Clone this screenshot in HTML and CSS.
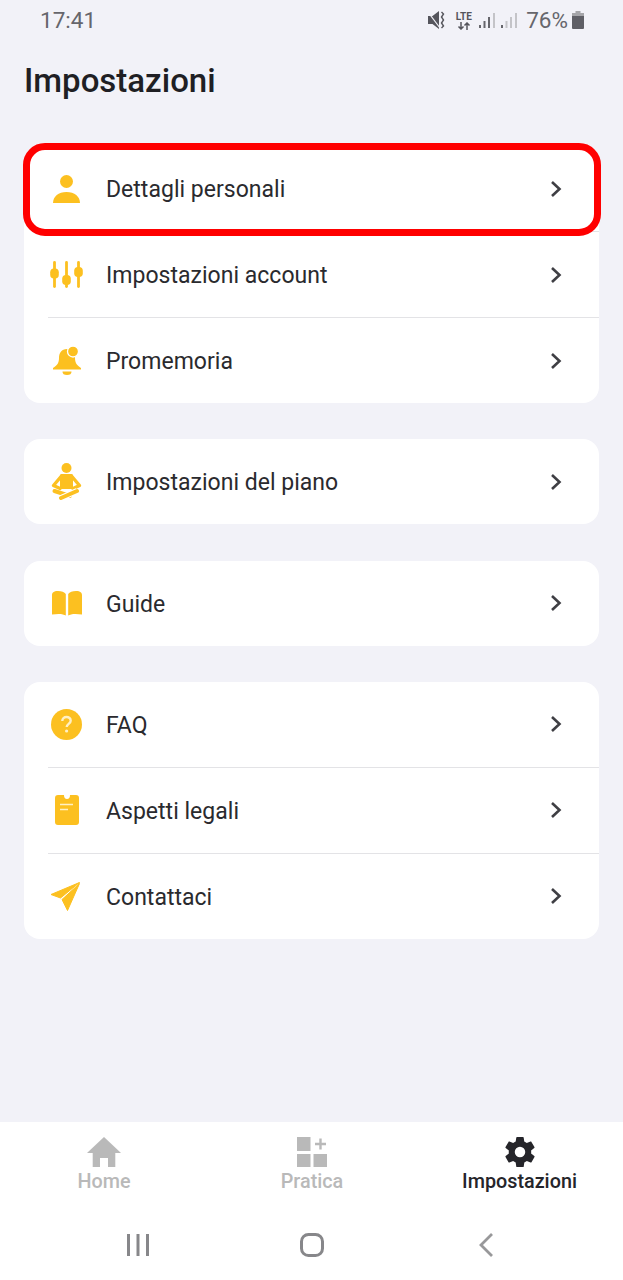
FILE: index.html
```html
<!DOCTYPE html>
<html lang="it">
<head>
<meta charset="utf-8">
<title>Impostazioni</title>
<link rel="stylesheet" href="styles.css">
</head>
<body>
<div class="screen">
  <div class="status">
    <span class="time">17:41</span>
    <div class="status-right">
      <svg class="st-mute" viewBox="0 0 17 18" width="17" height="18"><path d="M0 5h4.500L11 0v18l-6.500-5H0z" fill="#55555c"/><path d="M0 1l12 16" stroke="#f2f2f8" stroke-width="1.200"/><path d="M13.500 1l2 2-2 3 2 3-2 3 2 3-2 2" fill="none" stroke="#55555c" stroke-width="1.400"/></svg>
      <div class="st-lte"><span class="lte-text">LTE</span><svg viewBox="0 0 16 8" width="16" height="8"><path d="M5 0v7M2.500 4.500L5 7l2.500-2.500M11 8V1M8.500 3.500L11 1l2.500 2.500" fill="none" stroke="#55555c" stroke-width="1.500"/></svg></div>
      <svg class="st-sig" viewBox="0 0 16 17" width="16" height="17"><rect x="0" y="13" width="2" height="3" fill="#66666c"/><rect x="4.500" y="9" width="2" height="7" fill="#66666c"/><rect x="9" y="5" width="2" height="11" fill="#66666c"/><rect x="14" y="1" width="2" height="15" fill="#c4c4c8"/></svg>
      <svg class="st-sig" viewBox="0 0 16 17" width="16" height="17"><rect x="0" y="13" width="2" height="3" fill="#66666c"/><rect x="4.500" y="9" width="2" height="7" fill="#c4c4c8"/><rect x="9" y="5" width="2" height="11" fill="#c4c4c8"/><rect x="14" y="1" width="2" height="15" fill="#c4c4c8"/></svg>
      <span class="pct">76%</span>
      <svg class="st-bat" viewBox="0 0 12 18" width="12" height="18"><path d="M3.500 0h5v2h-5z" fill="#a5a5a9"/><path d="M0 2h12v4H0z" fill="#a5a5a9"/><path d="M0 5h12v12a1 1 0 0 1-1 1H1a1 1 0 0 1-1-1z" fill="#5f5f66"/></svg>
    </div>
  </div>

  <h1 class="title">Impostazioni</h1>

  <main class="groups">
    <section class="card">
      <a class="row">
        <span class="ico"><svg viewBox="0 0 27 28" width="27" height="28"><circle cx="13.500" cy="6.500" r="6.500" fill="#fcc020"/><path d="M0 28c0-6.500 5.500-11 13.500-11S27 21.500 27 28z" fill="#fcc020"/></svg></span>
        <span class="label">Dettagli personali</span>
        <svg class="chev" viewBox="0 0 14 18" width="14" height="18"><path d="M3 2l7.500 7L3 16" fill="none" stroke="#3f3f44" stroke-width="2.600"/></svg>
        <span class="highlight"></span>
      </a>
      <a class="row">
        <span class="ico"><svg viewBox="0 0 33 27" width="33" height="27"><g fill="#fcc020"><rect x="3.100" y="0" width="2.800" height="27" rx="1.400"/><rect x="15.100" y="0" width="2.800" height="27" rx="1.400"/><rect x="27.100" y="0" width="2.800" height="27" rx="1.400"/><rect x="0.200" y="7.500" width="8.600" height="10" rx="3.800"/><rect x="12.200" y="14" width="8.600" height="10" rx="3.800"/><rect x="24.200" y="6" width="8.600" height="10" rx="3.800"/></g></svg></span>
        <span class="label">Impostazioni account</span>
        <svg class="chev" viewBox="0 0 14 18" width="14" height="18"><path d="M3 2l7.500 7L3 16" fill="none" stroke="#3f3f44" stroke-width="2.600"/></svg>
      </a>
      <a class="row">
        <span class="ico"><svg viewBox="0 0 28 30" width="28" height="30"><path d="M14 3c-5.500 0-8 4-8 9 0 5-2 7.500-6 10v1.500h28V22c-4-2.500-6-5-6-10 0-5-2.500-9-8-9z" fill="#fcc020"/><path d="M9.500 25.500h9a4.500 3.500 0 0 1-9 0z" fill="#fcc020"/><circle cx="20" cy="5.500" r="5.500" fill="#fcc020" stroke="#fff" stroke-width="1.300"/></svg></span>
        <span class="label">Promemoria</span>
        <svg class="chev" viewBox="0 0 14 18" width="14" height="18"><path d="M3 2l7.500 7L3 16" fill="none" stroke="#3f3f44" stroke-width="2.600"/></svg>
      </a>
    </section>

    <section class="card">
      <a class="row">
        <span class="ico"><svg viewBox="0 0 31 37" width="31" height="37"><circle cx="15.500" cy="5" r="5" fill="#fcc020"/><path d="M10.500 11h10a1.500 1.500 0 0 1 1.500 1.500V26H9V12.500a1.500 1.500 0 0 1 1.500-1.500z" fill="#fcc020"/><path d="M10.500 13L2.500 22.500 9 25.500M20.500 13l8 9.500-6.500 3" fill="none" stroke="#fcc020" stroke-width="3.400" stroke-linecap="round" stroke-linejoin="round"/><path d="M3.500 28l15.500 5" fill="none" stroke="#fcc020" stroke-width="4" stroke-linecap="round"/><path d="M26 28L10 35" fill="none" stroke="#fff" stroke-width="6"/><path d="M26 28L10 35" fill="none" stroke="#fcc020" stroke-width="4" stroke-linecap="round"/></svg></span>
        <span class="label">Impostazioni del piano</span>
        <svg class="chev" viewBox="0 0 14 18" width="14" height="18"><path d="M3 2l7.500 7L3 16" fill="none" stroke="#3f3f44" stroke-width="2.600"/></svg>
      </a>
    </section>

    <section class="card">
      <a class="row">
        <span class="ico"><svg viewBox="0 0 30 25" width="30" height="25"><path d="M0 4c0-2 1.500-4 6-4 3.500 0 6.500 1 7.800 3v21.500C11.500 23 7 22.500 0 23.500z" fill="#fcc020"/><path d="M30 4c0-2-1.500-4-6-4-3.500 0-6.500 1-7.800 3v21.500c2.300-1.500 6.800-2 13.800-1z" fill="#fcc020"/></svg></span>
        <span class="label">Guide</span>
        <svg class="chev" viewBox="0 0 14 18" width="14" height="18"><path d="M3 2l7.500 7L3 16" fill="none" stroke="#3f3f44" stroke-width="2.600"/></svg>
      </a>
    </section>

    <section class="card">
      <a class="row">
        <span class="ico"><svg viewBox="0 0 31 31" width="31" height="31"><circle cx="15.500" cy="15.500" r="15.500" fill="#fcc020"/><path d="M11.300 12c0-2.500 1.800-4 4.200-4s4.200 1.500 4.200 3.700c0 3.100-4 3.300-4 6.300" fill="none" stroke="#fff0c4" stroke-width="2.400"/><circle cx="15.600" cy="22" r="1.600" fill="#fff0c4"/></svg></span>
        <span class="label">FAQ</span>
        <svg class="chev" viewBox="0 0 14 18" width="14" height="18"><path d="M3 2l7.500 7L3 16" fill="none" stroke="#3f3f44" stroke-width="2.600"/></svg>
      </a>
      <a class="row">
        <span class="ico"><svg viewBox="0 0 24 30" width="24" height="30"><path d="M3 0h6c0 2.500 1 4 3 4s3-1.500 3-4h6a3 3 0 0 1 3 3v24a3 3 0 0 1-3 3H3a3 3 0 0 1-3-3V3a3 3 0 0 1 3-3z" fill="#fcc020"/><path d="M5 9.500h13M5 14.500h8" stroke="#fff0c4" stroke-width="1.400"/></svg></span>
        <span class="label">Aspetti legali</span>
        <svg class="chev" viewBox="0 0 14 18" width="14" height="18"><path d="M3 2l7.500 7L3 16" fill="none" stroke="#3f3f44" stroke-width="2.600"/></svg>
      </a>
      <a class="row">
        <span class="ico"><svg class="plane" viewBox="0 0 31 31" width="31" height="31"><g fill="#fcc020" stroke="#fcc020" stroke-width="1" stroke-linejoin="round"><path d="M29.500 1.500L1 13.500l9.500 3.500z"/><path d="M29.500 2.500L12 18.500 17.500 29.500z"/></g></svg></span>
        <span class="label">Contattaci</span>
        <svg class="chev" viewBox="0 0 14 18" width="14" height="18"><path d="M3 2l7.500 7L3 16" fill="none" stroke="#3f3f44" stroke-width="2.600"/></svg>
      </a>
    </section>
  </main>

  <div class="bottom">
    <nav class="tabs">
      <a class="tab">
        <svg viewBox="0 0 34 30" width="34" height="30"><path d="M17 0L0 16h5.700v14H13v-9h8v9h7.300V16H34z" fill="#b9b9b9"/></svg>
        <span>Home</span>
      </a>
      <a class="tab">
        <svg viewBox="0 0 30 30" width="30" height="30"><g fill="#b9b9b9"><rect x="0" y="0" width="13.500" height="14"/><rect x="0" y="17" width="13.500" height="13"/><rect x="16.500" y="17" width="13.500" height="13"/></g><path d="M23.500 1.500v11M18 7h11" stroke="#b9b9b9" stroke-width="2.400"/></svg>
        <span>Pratica</span>
      </a>
      <a class="tab active">
        <svg viewBox="2 2 20 20" width="30" height="30"><path d="M19.400 13c.04-.33.07-.66.07-1s-.03-.67-.07-1l2.100-1.650c.2-.15.25-.42.12-.64l-2-3.460c-.12-.22-.38-.3-.6-.22l-2.500 1c-.52-.4-1.080-.73-1.690-.98l-.38-2.650A.49.49 0 0 0 14 2h-4c-.25 0-.46.18-.5.42l-.37 2.650c-.61.25-1.170.59-1.690.98l-2.490-1c-.23-.09-.49 0-.61.22l-2 3.460c-.13.22-.07.49.12.64L4.570 11c-.04.33-.07.67-.07 1s.03.67.07 1l-2.110 1.650c-.19.15-.24.42-.12.64l2 3.460c.12.22.38.3.61.22l2.490-1c.52.4 1.080.73 1.690.98l.37 2.650c.04.24.25.42.5.42h4c.25 0 .46-.18.49-.42l.38-2.650c.61-.25 1.170-.59 1.690-.98l2.490 1c.23.09.49 0 .61-.22l2-3.460c.12-.22.07-.49-.12-.64zM12 15.500a3.500 3.500 0 1 1 0-7 3.500 3.500 0 0 1 0 7z" fill="#25252a"/></svg>
        <span>Impostazioni</span>
      </a>
    </nav>
    <div class="sysnav">
      <svg viewBox="0 0 24 24" width="24" height="24"><path d="M2.500 1v22M12 1v22M21.500 1v22" stroke="#87878a" stroke-width="3"/></svg>
      <svg viewBox="0 0 26 26" width="26" height="26"><rect x="2.500" y="2.500" width="21" height="21" rx="7" fill="none" stroke="#87878a" stroke-width="3"/></svg>
      <svg viewBox="0 0 16 26" width="16" height="26"><path d="M14 2L3 13l11 11" fill="none" stroke="#98989a" stroke-width="2.800"/></svg>
    </div>
  </div>
</div>
</body>
</html>
```

FILE: styles.css
```css
* { box-sizing: border-box; }
html, body { margin: 0; padding: 0; }
body { background: #f2f2f8; font-family: Roboto, "Noto Sans", sans-serif; color: #25252a; }
.screen { width: 623px; height: 1280px; display: flex; flex-direction: column; overflow: hidden; }

.status { height: 40px; padding: 0 39px 0 40px; display: flex; align-items: center; justify-content: space-between; color: #66666c; }
.time { font-size: 22.5px; line-height: 40px; }
.status-right { display: flex; align-items: center; }
.st-mute { margin-right: 10px; }
.st-lte { display: flex; flex-direction: column; align-items: center; width: 17px; margin-right: 7px; }
.lte-text { font-size: 10px; line-height: 11px; font-weight: 700; color: #55555c; }
.st-sig { margin-right: 6px; }
.pct { font-size: 22.5px; line-height: 40px; margin-left: 3px; }
.st-bat { margin-left: 4px; }

.title { margin: 0; padding: 22px 24px 0; font-size: 33px; line-height: 38px; font-weight: 500; color: #1f1f24; }

.groups { padding: 46px 24px 0; display: flex; flex-direction: column; gap: 36.3px; flex: 1; }
.card { background: #fff; border-radius: 16px; }
.row { position: relative; height: 86px; margin-left: 24px; display: flex; align-items: center; border-top: 1px solid #e3e3e6; }
.row:first-child { border-top: 0; height: 85px; }
.ico { width: 36px; margin-left: 0.5px; display: flex; justify-content: center; flex: none; }
.plane { margin-left: -2px; }
.label { margin-left: 21.5px; padding-top: 2px; font-size: 23px; letter-spacing: 0.02px; flex: 1; color: #2a2a2e; }
.chev { margin: 0 36px 0 0; flex: none; }
.highlight { position: absolute; z-index: 1; left: -25.5px; right: -2px; top: -3px; bottom: -5px; border: 7.5px solid #ff0000; border-radius: 22px; pointer-events: none; }

.bottom { height: 158px; background: #fff; flex: none; display: flex; flex-direction: column; }
.tabs { height: 88px; display: grid; grid-template-columns: 208px 208px 207px; padding-top: 15px; }
.tab { display: flex; flex-direction: column; align-items: center; font-size: 19.8px; line-height: 24px; font-weight: 500; color: #b9b9b9; }
.tab span { margin-top: 3px; }
.tab.active { color: #25252a; }
.sysnav { flex: 1; display: grid; grid-template-columns: 276px 72px 275px; align-items: center; justify-items: center; }
```
